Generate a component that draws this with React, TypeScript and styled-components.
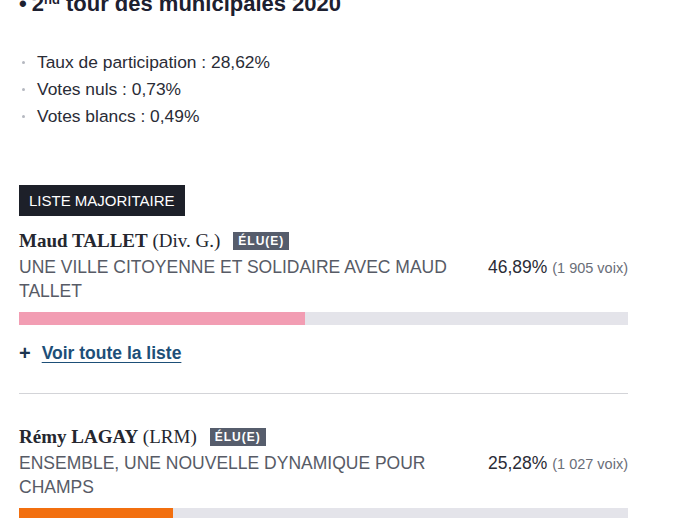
import React from 'react';
import styled, { createGlobalStyle } from 'styled-components';

const GlobalStyle = createGlobalStyle`
  html, body {
    margin: 0;
    padding: 0;
    background: #ffffff;
  }
  body {
    font-family: 'Liberation Sans', Arial, sans-serif;
    color: #25272f;
    overflow: hidden;
  }
`;

const Page = styled.div`
  width: 609px;
  padding: 0 19px;
`;

const Title = styled.h2`
  margin: -10px 0 0;
  font-size: 22px;
  line-height: 28px;
  font-weight: 700;
  color: #1d2030;

  sup {
    font-size: 13px;
    line-height: 0;
    vertical-align: 7px;
  }
`;

const TitleBullet = styled.span`
  margin-right: 5px;
`;

const Stats = styled.ul`
  list-style: none;
  margin: 31px 0 0;
  padding: 0;
`;

const StatItem = styled.li`
  display: flex;
  align-items: center;
  gap: 12px;
  font-size: 17.4px;
  line-height: 27px;
  color: #2a2c36;

  &::before {
    content: '';
    width: 3px;
    height: 3px;
    margin-left: 3px;
    border-radius: 50%;
    background: #b5b8c0;
  }
`;

const MajorityTag = styled.div`
  display: inline-block;
  margin-top: 55px;
  padding: 0 10px;
  height: 31px;
  line-height: 31px;
  background: #1d2029;
  color: #ffffff;
  font-size: 15px;
  text-transform: uppercase;
`;

const Candidate = styled.section<{ $first?: boolean }>`
  padding-top: ${(p) => (p.$first ? '14px' : '32px')};
`;

const NameRow = styled.div`
  display: flex;
  align-items: center;
  gap: 13px;
  height: 22px;
`;

const Name = styled.span`
  font-family: 'Liberation Serif', 'Times New Roman', serif;
  font-size: 19px;
  color: #25272f;

  strong {
    font-weight: 700;
  }
`;

const ElectedBadge = styled.span`
  display: inline-block;
  height: 18px;
  line-height: 18px;
  padding: 0 5px;
  background: #565d6c;
  color: #ffffff;
  font-size: 12px;
  font-weight: 700;
  letter-spacing: 1px;
`;

const ListRow = styled.div`
  display: flex;
  justify-content: space-between;
  align-items: flex-start;
  margin-top: 3px;
`;

const ListName = styled.div`
  width: 450px;
  font-size: 17.5px;
  line-height: 24px;
  text-transform: uppercase;
  color: #575b66;
`;

const Score = styled.div`
  font-size: 17.5px;
  line-height: 24px;
  color: #2a2c36;
  white-space: nowrap;

  small {
    font-size: 14.5px;
    color: #6a6e78;
  }
`;

const Bar = styled.div`
  height: 13px;
  margin-top: 9px;
  background: #e4e4ea;
`;

const BarFill = styled.div<{ $color: string }>`
  height: 100%;
  background: ${(p) => p.$color};
`;

const MoreLink = styled.a`
  display: flex;
  align-items: center;
  gap: 11px;
  height: 24px;
  margin-top: 16px;
  font-size: 17.5px;
  font-weight: 700;
  color: #1d4f78;
  cursor: pointer;

  span {
    text-decoration: underline;
    text-underline-offset: 3px;
  }
`;

const Plus = styled.b`
  font-size: 20px;
  line-height: 20px;
  color: #1d3550;
`;

const Divider = styled.hr`
  margin: 28px 0 0;
  border: none;
  border-top: 1px solid #d3d4d8;
`;

type CandidateData = {
  first: string;
  last: string;
  party: string;
  list: string;
  pct: string;
  votes: string;
  share: number;
  color: string;
};

const candidates: CandidateData[] = [
  {
    first: 'Maud',
    last: 'TALLET',
    party: 'Div. G.',
    list: 'Une ville citoyenne et solidaire avec Maud Tallet',
    pct: '46,89%',
    votes: '1 905 voix',
    share: 46.89,
    color: '#f29db3',
  },
  {
    first: 'Rémy',
    last: 'LAGAY',
    party: 'LRM',
    list: 'Ensemble, une nouvelle dynamique pour Champs',
    pct: '25,28%',
    votes: '1 027 voix',
    share: 25.28,
    color: '#f26f0f',
  },
];

export default function App() {
  return (
    <Page>
      <GlobalStyle />
      <Title>
        <TitleBullet>•</TitleBullet>2<sup>nd</sup> tour des municipales 2020
      </Title>
      <Stats>
        <StatItem>Taux de participation : 28,62%</StatItem>
        <StatItem>Votes nuls : 0,73%</StatItem>
        <StatItem>Votes blancs : 0,49%</StatItem>
      </Stats>
      <MajorityTag>Liste majoritaire</MajorityTag>
      {candidates.map((c, index) => (
        <React.Fragment key={c.last}>
          <Candidate $first={index === 0}>
            <NameRow>
              <Name>
                <strong>
                  {c.first} {c.last}
                </strong>{' '}
                ({c.party})
              </Name>
              <ElectedBadge>ÉLU(E)</ElectedBadge>
            </NameRow>
            <ListRow>
              <ListName>{c.list}</ListName>
              <Score>
                {c.pct} <small>({c.votes})</small>
              </Score>
            </ListRow>
            <Bar>
              <BarFill $color={c.color} style={{ width: `${c.share}%` }} />
            </Bar>
          </Candidate>
          {index === 0 && (
            <>
              <MoreLink>
                <Plus>+</Plus>
                <span>Voir toute la liste</span>
              </MoreLink>
              <Divider />
            </>
          )}
        </React.Fragment>
      ))}
    </Page>
  );
}
